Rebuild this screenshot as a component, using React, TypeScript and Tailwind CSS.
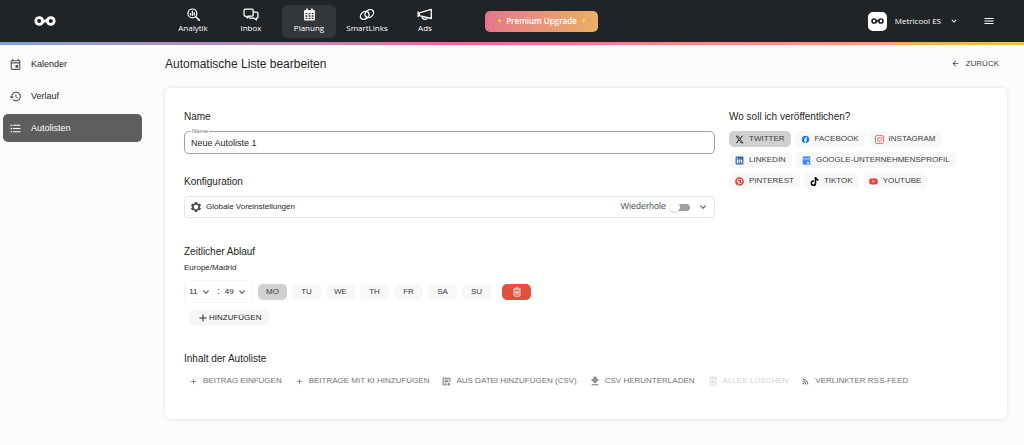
import { useState } from "react";
import type { ReactNode } from "react";
import clsx from "clsx";
import { FaLinkedin, FaPinterest, FaTiktok, FaXTwitter, FaYoutube } from "react-icons/fa6";
import {
  MdAdd,
  MdArrowBack,
  MdExpandMore,
  MdFacebook,
  MdFormatListBulleted,
  MdHistory,
  MdMenu,
  MdOutlineEvent,
  MdRssFeed,
} from "react-icons/md";
import { BsInstagram } from "react-icons/bs";

function Logo({ className }: { className?: string }) {
  return (
    <svg viewBox="0 0 40 18" className={className} fill="none" stroke="currentColor" strokeWidth="5">
      <circle cx="9.500" cy="9" r="6.3" />
      <circle cx="30.500" cy="9" r="6.3" />
      <path d="M14 12.5C17 9 23 9 26 5.5" />
    </svg>
  );
}

function AnalyticsIcon() {
  return (
    <svg viewBox="0 0 24 24" className="size-[13px]" fill="none" stroke="currentColor" strokeWidth="2.2" strokeLinecap="round">
      <circle cx="10" cy="10" r="8.2" />
      <path d="M16.2 16.2 22.5 22.5" strokeWidth="3" />
      <path d="M6.500 13v-2.5M10 13.5V6M13.5 13V9" strokeWidth="2.4" />
    </svg>
  );
}

function InboxIcon() {
  return (
    <svg viewBox="0 0 30 24" className="h-[13px] w-4" fill="none" stroke="currentColor" strokeWidth="2.4" strokeLinejoin="round">
      <path d="M9 15v3.500L4.500 15H4a2 2 0 0 1-2-2V4a2 2 0 0 1 2-2h13a2 2 0 0 1 2 2v9a2 2 0 0 1-2 2Z" />
      <path d="M19 7.500h7a2 2 0 0 1 2 2V17a2 2 0 0 1-2 2h-1v3.500L20.500 19H14a2 2 0 0 1-2-2v-2" />
    </svg>
  );
}

function PlannerIcon() {
  return (
    <svg viewBox="0 0 24 24" className="size-[13px]" fill="currentColor">
      <path
        fillRule="evenodd"
        d="M6 1h3v2.5h6V1h3v2.5h2A2 2 0 0 1 22 5.500V21a2 2 0 0 1-2 2H4a2 2 0 0 1-2-2V5.500A2 2 0 0 1 4 3.500h2ZM4.500 9v2.500h3.500v-2.500ZM10.200 9v2.500h3.600v-2.500ZM16 9v2.500h3.500v-2.500ZM4.500 13.500v2.500h3.500v-2.500ZM10.200 13.500v2.500h3.600v-2.500ZM16 13.500v2.500h3.500v-2.500ZM4.500 18v2.500h3.500v-2.500ZM10.200 18v2.500h3.600v-2.500ZM16 18v2.500h3.500v-2.500Z"
      />
    </svg>
  );
}

function SmartLinksIcon() {
  return (
    <svg viewBox="0 0 28 22" className="h-[13px] w-4" fill="none" stroke="currentColor" strokeWidth="2.4">
      <ellipse cx="10" cy="12.500" rx="8.2" ry="6.2" transform="rotate(-38 10 12.500)" />
      <ellipse cx="18" cy="9.500" rx="8.2" ry="6.2" transform="rotate(-38 18 9.500)" />
    </svg>
  );
}

function AdsIcon() {
  return (
    <svg viewBox="0 0 28 22" className="h-[13px] w-4" fill="none" stroke="currentColor" strokeWidth="2.4" strokeLinejoin="round">
      <path d="M4 8 25 2v16L4 13Z" />
      <path d="M2 6.500v8" strokeLinecap="round" />
      <path d="M9 14.500c0 6 8 6.500 9 2" />
    </svg>
  );
}

function GearIcon() {
  return (
    <svg viewBox="0 0 24 24" className="size-3" fill="currentColor">
      <path
        fillRule="evenodd"
        d="M9.500 2h5l.6 2.900 1.700 1 2.800-1 2.500 4.300-2.200 1.900v1.800l2.200 1.900-2.500 4.300-2.800-1-1.700 1-.6 2.900h-5l-.6-2.900-1.700-1-2.800 1-2.500-4.300 2.200-1.900v-1.800L1.900 9.200l2.500-4.300 2.800 1 1.700-1ZM12 7.600a4.400 4.400 0 1 0 0 8.800a4.400 4.400 0 1 0 0-8.800Z"
      />
    </svg>
  );
}

function StoreIcon() {
  return (
    <svg viewBox="0 0 24 24" className="size-[9px]">
      <path d="M2 1h20v4H2Z" fill="#3b82f0" />
      <path d="M2 5h20l1 6H1Z" fill="#7fb0f8" />
      <path d="M2 11h20v12H2Z" fill="#3b82f0" />
      <path d="M13 16h6v4h-6Z" fill="#fff" />
    </svg>
  );
}

function DownloadIcon() {
  return (
    <svg viewBox="0 0 24 24" className="size-[10px]" fill="none" stroke="currentColor" strokeWidth="2">
      <path d="M9.500 3h5v6H19l-7 7-7-7h4.500ZM4 21h16" strokeWidth="2.5" />
      <path d="M12 4v9" strokeWidth="3" />
    </svg>
  );
}

function TrashIcon({ className }: { className?: string }) {
  return (
    <svg viewBox="0 0 24 24" className={className} fill="none" stroke="currentColor" strokeWidth="2">
      <path d="M3 5h18M9 4.500V2h6v2.500M5 5v15a2 2 0 0 0 2 2h10a2 2 0 0 0 2-2V5M9.500 9v9M14.500 9v9M12 9v9" />
    </svg>
  );
}

function CsvIcon() {
  return (
    <svg viewBox="0 0 24 24" className="size-[9px]" fill="none" stroke="currentColor" strokeWidth="2.6">
      <path d="M13 21H3V3h18v10M7 8h10M7 12h10M7 16h5M18 15v8M14 19h8" />
    </svg>
  );
}

const navItems = [
  { label: "Analytik", icon: <AnalyticsIcon /> },
  { label: "Inbox", icon: <InboxIcon /> },
  { label: "Planung", icon: <PlannerIcon />, active: true },
  { label: "SmartLinks", icon: <SmartLinksIcon /> },
  { label: "Ads", icon: <AdsIcon /> },
];

const sideItems = [
  { label: "Kalender", icon: <MdOutlineEvent /> },
  { label: "Verlauf", icon: <MdHistory /> },
  { label: "Autolisten", icon: <MdFormatListBulleted />, active: true },
];

const networks = [
  { label: "TWITTER", icon: <FaXTwitter className="text-neutral-800" /> },
  { label: "FACEBOOK", icon: <MdFacebook className="text-[#1877f2]" /> },
  { label: "INSTAGRAM", icon: <BsInstagram className="text-[#e4565b]" /> },
  { label: "LINKEDIN", icon: <FaLinkedin className="text-[#2f6cab]" /> },
  { label: "GOOGLE-UNTERNEHMENSPROFIL", icon: <StoreIcon /> },
  { label: "PINTEREST", icon: <FaPinterest className="text-[#dc3a3a]" /> },
  { label: "TIKTOK", icon: <FaTiktok className="text-black" /> },
  { label: "YOUTUBE", icon: <FaYoutube className="text-[#e5453a]" /> },
];

const days = ["MO", "TU", "WE", "TH", "FR", "SA", "SU"];

const actions = [
  { label: "BEITRAG EINFÜGEN", icon: <MdAdd className="size-[9px]" /> },
  { label: "BEITRÄGE MIT KI HINZUFÜGEN", icon: <MdAdd className="size-[9px]" /> },
  { label: "AUS DATEI HINZUFÜGEN (CSV)", icon: <CsvIcon /> },
  { label: "CSV HERUNTERLADEN", icon: <DownloadIcon /> },
  { label: "ALLES LÖSCHEN", icon: <TrashIcon className="size-[10px]" />, disabled: true },
  { label: "VERLINKTER RSS-FEED", icon: <MdRssFeed className="size-[9px]" /> },
];

function Heading({ children }: { children: ReactNode }) {
  return <h2 className="text-[10px] leading-4 text-neutral-800">{children}</h2>;
}

function TimeSelect({ label, value, options }: { label: string; value: string; options: string[] }) {
  return (
    <div className="grid items-center">
      <select
        aria-label={label}
        defaultValue={value}
        className="col-start-1 row-start-1 h-5 w-[23px] appearance-none bg-transparent text-[8px] text-neutral-800 outline-none"
      >
        {options.map((o) => (
          <option key={o}>{o}</option>
        ))}
      </select>
      <MdExpandMore className="pointer-events-none col-start-1 row-start-1 size-3 justify-self-end text-neutral-600" />
    </div>
  );
}

function Header() {
  return (
    <header className="bg-[#212427] font-['Open_Sans',sans-serif] text-white">
      <div className="flex h-[42px] items-center">
        <a href="#" aria-label="Metricool" className="ml-[34px] w-[132px]">
          <Logo className="h-[10px] w-[22px]" />
        </a>
        <nav className="flex gap-1">
          {navItems.map((item) => (
            <a
              key={item.label}
              href="#"
              className={clsx(
                "flex h-[33px] w-[54px] flex-col items-center justify-center gap-px rounded-md text-[8px] leading-3 font-medium",
                item.active && "bg-[#34373a]"
              )}
            >
              {item.icon}
              {item.label}
            </a>
          ))}
        </nav>
        <button className="ml-[33px] flex h-[21px] w-[113px] items-center justify-center gap-1 rounded-[5px] bg-linear-to-r from-[#e6758a] to-[#e8b062] text-[8px] font-semibold whitespace-nowrap">
          <span className="text-[6px] text-yellow-300">✦</span>
          Premium Upgrade
          <span className="text-[6px] text-yellow-300">✦</span>
        </button>
        <button className="ml-auto flex items-center gap-2 text-[8px] font-medium">
          <span className="flex size-[19px] items-center justify-center rounded-[5px] bg-white text-[#212427]">
            <Logo className="h-[6px] w-[13px]" />
          </span>
          Metricool ES
          <MdExpandMore className="size-[10px]" />
        </button>
        <button aria-label="Menü" className="mr-[29px] ml-6">
          <MdMenu className="size-3" />
        </button>
      </div>
      <div className="h-[3px] bg-linear-to-r from-[#7f9fd8] via-[#e06f9a] via-45% to-[#f5b95c]" />
    </header>
  );
}

export default function App() {
  const [network, setNetwork] = useState("TWITTER");
  const [day, setDay] = useState("MO");

  return (
    <div className="min-h-screen bg-[#fcfcfc] font-['Liberation_Sans',Arial,sans-serif] text-neutral-800">
      <Header />
      <div className="flex">
        <aside className="flex w-[165px] shrink-0 flex-col gap-1 py-[5px] pr-[23px] pl-[3px]">
          {sideItems.map((item) => (
            <a
              key={item.label}
              href="#"
              className={clsx(
                "flex h-7 items-center gap-[9px] rounded-[5px] px-[6px] text-[9px] leading-3",
                item.active ? "bg-[#5e5e5e] text-white" : "text-neutral-800"
              )}
            >
              <span className={clsx("text-[13px]", !item.active && "text-neutral-600")}>{item.icon}</span>
              {item.label}
            </a>
          ))}
        </aside>

        <main className="min-w-0 flex-1 pr-[17px]">
          <div className="mb-[6px] flex h-[37px] items-center justify-between pr-2">
            <h1 className="text-[12px] leading-4">Automatische Liste bearbeiten</h1>
            <a href="#" className="flex items-center gap-[6px] text-[8px] leading-4 text-neutral-700">
              <MdArrowBack className="size-[9px]" />
              ZURÜCK
            </a>
          </div>

          <section className="rounded-[5px] bg-white px-[19px] pt-[21px] pb-[29px] shadow-[0_0_4px_rgba(0,0,0,0.12)]">
            <div className="flex gap-[14px]">
              <div className="min-w-0 flex-1">
                <Heading>Name</Heading>
                <fieldset className="mt-[2px] h-[27px] rounded-[5px] border border-neutral-400 px-[6px]">
                  <legend className="px-px text-[6px] leading-2 text-neutral-500">
                    <label htmlFor="list-name">Name</label>
                  </legend>
                  <input
                    id="list-name"
                    defaultValue="Neue Autoliste 1"
                    className="block h-4 w-full bg-transparent text-[9px] outline-none"
                  />
                </fieldset>

                <div className="mt-5">
                  <Heading>Konfiguration</Heading>
                </div>
                <div className="mt-[6px] flex h-[22px] items-center rounded-[4px] border border-neutral-200 px-[5px] text-neutral-600">
                  <GearIcon />
                  <span className="ml-1 text-[8px] text-neutral-800">Globale Voreinstellungen</span>
                  <label className="ml-auto flex items-center gap-1 text-[9px]">
                    Wiederhole
                    <input type="checkbox" role="switch" className="peer sr-only" />
                    <span className="flex h-[7px] w-5 items-center rounded-full bg-linear-to-r from-transparent from-30% to-neutral-400 to-30%">
                      <span className="size-[10px] shrink-0 rounded-full bg-white shadow-[0_1px_2px_rgba(0,0,0,0.2)]" />
                    </span>
                  </label>
                  <button aria-label="Voreinstellungen öffnen" className="ml-[7px]">
                    <MdExpandMore className="size-3" />
                  </button>
                </div>
              </div>

              <div className="w-[259px] shrink-0">
                <Heading>Wo soll ich veröffentlichen?</Heading>
                <div className="mt-[6px] flex flex-wrap gap-x-1 gap-y-[5px]">
                  {networks.map((n) => (
                    <button
                      key={n.label}
                      onClick={() => setNetwork(n.label)}
                      className={clsx(
                        "flex h-4 items-center gap-[5px] rounded-[5px] px-[6px] text-[8px] text-neutral-700",
                        n.label === network ? "bg-[#d0d0d0]" : "bg-[#f8f8f8]"
                      )}
                    >
                      <span className="text-[9px]">{n.icon}</span>
                      {n.label}
                    </button>
                  ))}
                </div>
              </div>
            </div>

            <div className="mt-[26px]">
              <Heading>Zeitlicher Ablauf</Heading>
              <p className="mt-[2px] text-[8px] leading-3">Europe/Madrid</p>
              <div className="mt-[6px] flex items-center gap-[5px]">
                <div className="flex h-[23px] w-[69px] items-center justify-center gap-[5px] rounded-[4px] border border-neutral-100 text-[9px]">
                  <TimeSelect label="Stunde" value="11" options={["10", "11", "12"]} />
                  :
                  <TimeSelect label="Minute" value="49" options={["48", "49", "50"]} />
                </div>
                {days.map((d) => (
                  <button
                    key={d}
                    onClick={() => setDay(d)}
                    className={clsx(
                      "h-4 w-[29px] rounded-[5px] text-[8px] text-neutral-700",
                      d === day ? "bg-[#d0d0d0]" : "bg-[#f8f8f8]"
                    )}
                  >
                    {d}
                  </button>
                ))}
                <button
                  aria-label="Zeit löschen"
                  className="ml-[6px] flex h-4 w-[29px] items-center justify-center rounded-[5px] bg-[#e2503f] text-white"
                >
                  <TrashIcon className="size-[10px]" />
                </button>
              </div>
              <button className="mt-[7px] ml-[5px] flex h-4 items-center rounded-[5px] bg-[#f6f6f6] px-2 text-[8px]">
                <MdAdd className="size-3" />
                HINZUFÜGEN
              </button>
            </div>

            <div className="mt-[25px]">
              <Heading>Inhalt der Autoliste</Heading>
              <div className="mt-[5px] flex flex-wrap gap-x-[13px] pl-[5px]">
                {actions.map((a) => (
                  <button
                    key={a.label}
                    disabled={a.disabled}
                    className={clsx(
                      "flex h-[18px] items-center gap-[5px] text-[8px] whitespace-nowrap",
                      a.disabled ? "text-neutral-300" : "text-neutral-500"
                    )}
                  >
                    {a.icon}
                    {a.label}
                  </button>
                ))}
              </div>
            </div>
          </section>
        </main>
      </div>
    </div>
  );
}
